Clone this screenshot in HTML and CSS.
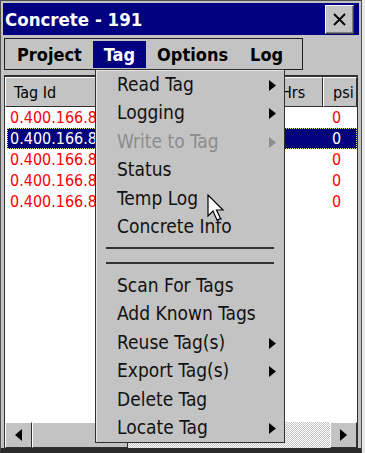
FILE: index.html
```html
<!DOCTYPE html>
<html>
<head>
<meta charset="utf-8">
<link rel="stylesheet" href="styles.css">
</head>
<body>
<div class="window">
  <div class="titlebar">
    <span class="title">Concrete - 191</span>
    <div class="close"><svg width="13" height="13" viewBox="0 0 13 13"><path d="M1 1 L12 12 M12 1 L1 12" stroke="#000" stroke-width="1.8"/></svg></div>
  </div>
  <div class="menurow">
    <div class="menubar">
      <span class="mitem">Project</span>
      <span class="mitem active">Tag</span>
      <span class="mitem">Options</span>
      <span class="mitem">Log</span>
    </div>
  </div>
  <div class="list">
    <div class="header">
      <div class="hcell c1">Tag Id</div>
      <div class="hcell c2"></div>
      <div class="hcell c3">Hrs</div>
      <div class="hcell c4">psi</div>
    </div>
    <div class="rows">
      <div class="row"><span class="cell c1">0.400.166.8</span><span class="cell c2"></span><span class="cell c3"></span><span class="cell c4">0</span></div>
      <div class="row sel"><span class="cell c1">0.400.166.8</span><span class="cell c2"></span><span class="cell c3"></span><span class="cell c4">0</span></div>
      <div class="row"><span class="cell c1">0.400.166.8</span><span class="cell c2"></span><span class="cell c3"></span><span class="cell c4">0</span></div>
      <div class="row"><span class="cell c1">0.400.166.8</span><span class="cell c2"></span><span class="cell c3"></span><span class="cell c4">0</span></div>
      <div class="row"><span class="cell c1">0.400.166.8</span><span class="cell c2"></span><span class="cell c3"></span><span class="cell c4">0</span></div>
    </div>
    <div class="hscroll">
      <div class="sbtn"><svg width="7" height="12" viewBox="0 0 7 12"><path d="M7 0 L0 6 L7 12 Z" fill="#000"/></svg></div>
      <div class="thumb"></div>
      <div class="track"></div>
      <div class="sbtn"><svg width="7" height="12" viewBox="0 0 7 12"><path d="M0 0 L7 6 L0 12 Z" fill="#000"/></svg></div>
    </div>
  </div>

  <div class="dropdown">
    <div class="ditem">Read Tag<svg class="arr" width="7" height="11" viewBox="0 0 7 11"><path d="M0 0 L7 5.5 L0 11 Z"/></svg></div>
    <div class="ditem">Logging<svg class="arr" width="7" height="11" viewBox="0 0 7 11"><path d="M0 0 L7 5.5 L0 11 Z"/></svg></div>
    <div class="ditem disabled">Write to Tag<svg class="arr" width="7" height="11" viewBox="0 0 7 11"><path d="M0 0 L7 5.5 L0 11 Z"/></svg></div>
    <div class="ditem">Status</div>
    <div class="ditem">Temp Log</div>
    <div class="ditem">Concrete Info</div>
    <div class="sep"></div>
    <div class="sep"></div>
    <div class="ditem">Scan For Tags</div>
    <div class="ditem">Add Known Tags</div>
    <div class="ditem">Reuse Tag(s)<svg class="arr" width="7" height="11" viewBox="0 0 7 11"><path d="M0 0 L7 5.5 L0 11 Z"/></svg></div>
    <div class="ditem">Export Tag(s)<svg class="arr" width="7" height="11" viewBox="0 0 7 11"><path d="M0 0 L7 5.5 L0 11 Z"/></svg></div>
    <div class="ditem">Delete Tag</div>
    <div class="ditem">Locate Tag<svg class="arr" width="7" height="11" viewBox="0 0 7 11"><path d="M0 0 L7 5.5 L0 11 Z"/></svg></div>
  </div>

  <svg class="cursor" width="20" height="28" viewBox="0 0 20 28"><path d="M1 1 L1 22 L6 17 L10 26 L13.5 24.5 L9.5 16 L16 16 Z" fill="#fff" stroke="#000" stroke-width="1.2" stroke-linejoin="miter"/></svg>
</div>
</body>
</html>
```
FILE: styles.css
```css
* { box-sizing: border-box; }

body {
  margin: 0;
  width: 365px;
  height: 453px;
  overflow: hidden;
  background: #e9e9e9;
  font-family: "DejaVu Sans Condensed", "DejaVu Sans", sans-serif;
  font-stretch: condensed;
}

.window {
  position: relative;
  width: 362px;
  height: 453px;
  background: #c3c3c3;
  border: 1px solid #505050;
  border-bottom: 5px solid #2a2a2a;
  padding: 2px 2px 0 2px;
  display: flex;
  flex-direction: column;
}

.titlebar {
  height: 32px;
  background: #000080;
  display: flex;
  align-items: center;
  padding: 0 5px 0 2px;
}

.title {
  color: #fff;
  font-weight: bold;
  font-size: 18.5px;
  flex: 1;
}

.close {
  width: 29px;
  height: 29px;
  background: #c3c3c3;
  border-top: 1px solid #fff;
  border-left: 1px solid #fff;
  border-right: 1px solid #404040;
  border-bottom: 1px solid #404040;
  box-shadow: inset -1px -1px 0 #808080;
  display: flex;
  align-items: center;
  justify-content: center;
}

.menurow {
  margin-top: 3px;
  display: flex;
}

.menubar {
  margin-left: 1px;
  width: 299px;
  height: 32px;
  border: 1px solid #202020;
  padding: 2px 1px 1px 1px;
  display: flex;
}

.mitem {
  font-weight: bold;
  font-size: 18px;
  padding: 0 11px;
  height: 27px;
  line-height: 27px;
  color: #000;
}

.mitem.active {
  background: #000080;
  color: #fff;
}

.list {
  flex: 1;
  margin: 5px 1px 0 1px;
  background: #fff;
  border-top: 2px solid #303030;
  border-left: 1px solid #303030;
  border-right: 1px solid #303030;
  display: flex;
  flex-direction: column;
}

.header {
  height: 30px;
  display: flex;
  background: #c3c3c3;
}

.hcell {
  font-size: 16px;
  line-height: 30px;
  border-top: 1px solid #fff;
  border-left: 1px solid #fff;
  border-right: 1px solid #303030;
  border-bottom: 1px solid #303030;
  padding-left: 8px;
  white-space: nowrap;
  overflow: hidden;
}

.c1 { width: 146px; }
.c2 { width: 120px; }
.c3 { width: 52px; padding-left: 9px; }
.c4 { flex: 1; padding-left: 9px; }

.rows {
  flex: 1;
}

.row {
  height: 21px;
  display: flex;
  align-items: center;
  font-size: 16px;
  color: #ff0000;
  margin-left: 2px;
}

.cell {
  white-space: nowrap;
  overflow: hidden;
}

.row .c1 { padding-left: 3px; width: 144px; }
.row .c4 { padding-left: 9px; }

.row.sel {
  background: #000080;
  color: #fff;
  outline: 1px dotted #e8e070;
  outline-offset: -1px;
}

.hscroll {
  height: 26px;
  display: flex;
  background: #c3c3c3;
}

.sbtn {
  width: 27px;
  height: 26px;
  background: #c3c3c3;
  border-top: 1px solid #fff;
  border-left: 1px solid #fff;
  border-right: 1px solid #303030;
  border-bottom: 1px solid #303030;
  display: flex;
  align-items: center;
  justify-content: center;
}

.thumb {
  width: 96px;
  height: 26px;
  background: #c3c3c3;
  border-top: 1px solid #fff;
  border-left: 1px solid #fff;
  border-right: 1px solid #303030;
  border-bottom: 1px solid #303030;
}

.track {
  flex: 1;
  background-color: #fff;
  background-image: repeating-conic-gradient(#c3c3c3 0 25%, #ffffff 0 50%);
  background-size: 2px 2px;
}

.dropdown {
  position: absolute;
  left: 94px;
  top: 68px;
  width: 190px;
  height: 374px;
  background: #c3c3c3;
  border: 1px solid #303030;
  box-shadow: inset 1px 1px 0 #e6e6e6;
  padding-top: 1px;
}

.ditem {
  height: 28.5px;
  display: flex;
  align-items: center;
  padding: 0 8px 3px 21px;
  font-size: 19px;
  color: #111;
  white-space: nowrap;
}

.ditem .arr {
  margin-left: auto;
  margin-top: 3px;
  fill: #000;
}

.ditem.disabled {
  color: #8c8c8c;
}

.ditem.disabled .arr {
  fill: #8c8c8c;
}

.sep {
  height: 15px;
  padding: 5px 10px 0 10px;
}

.sep::before {
  content: "";
  display: block;
  height: 2px;
  background: #333;
}

.cursor {
  position: absolute;
  left: 206px;
  top: 193px;
}
```
